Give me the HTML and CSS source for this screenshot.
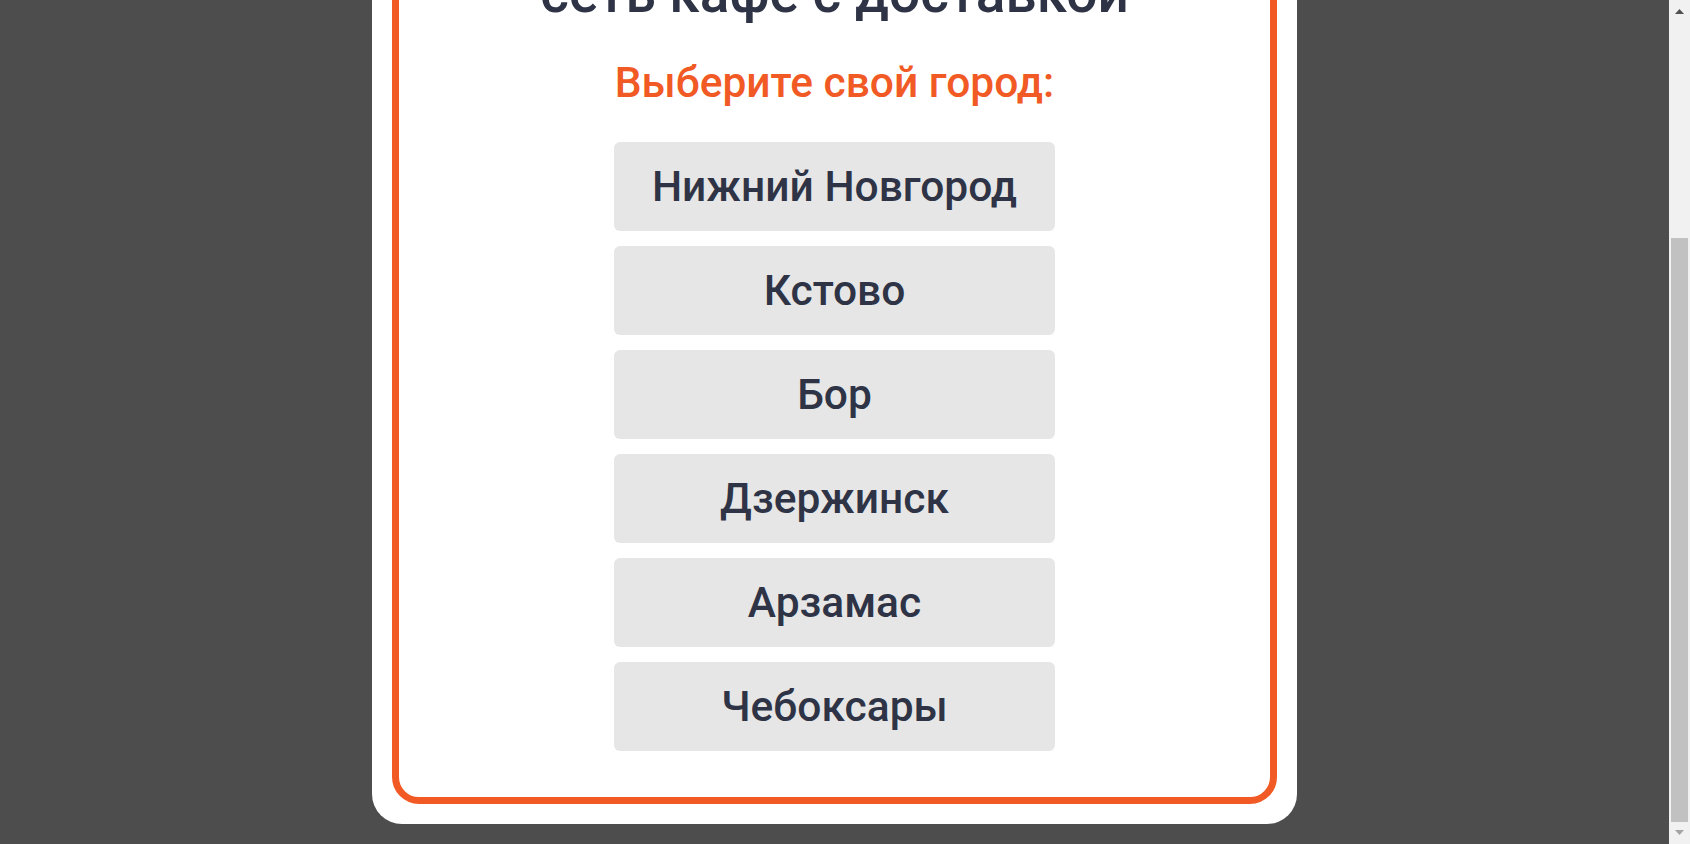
FILE: index.html
```html
<!DOCTYPE html>
<html lang="ru">
<head>
<meta charset="utf-8">
<title>Выбор города</title>
<link rel="stylesheet" href="styles.css">
</head>
<body>
<div class="page">
  <div class="viewport" id="viewport">
    <div class="overlay">
      <div class="modal">
        <div class="frame">
          <div class="logo">
            <svg width="140" height="140" viewBox="0 0 140 140" aria-hidden="true">
              <circle cx="70" cy="70" r="66" fill="#f15a24"/>
              <circle cx="70" cy="70" r="49" fill="#fff"/>
              <circle cx="70" cy="70" r="32" fill="#2e3445"/>
            </svg>
          </div>
          <h1 class="title">сеть кафе с доставкой</h1>
          <h2 class="subtitle">Выберите свой город:</h2>
          <ul class="cities">
            <li><a class="city" href="#">Нижний Новгород</a></li>
            <li><a class="city" href="#">Кстово</a></li>
            <li><a class="city" href="#">Бор</a></li>
            <li><a class="city" href="#">Дзержинск</a></li>
            <li><a class="city" href="#">Арзамас</a></li>
            <li><a class="city" href="#">Чебоксары</a></li>
          </ul>
        </div>
      </div>
    </div>
  </div>
  <div class="scrollbar" aria-hidden="true">
    <div class="sb-btn">
      <svg width="21" height="21" viewBox="0 0 21 21"><polygon points="6,14 15,14 10.5,9" fill="#505050"/></svg>
    </div>
    <div class="sb-track"><div class="sb-thumb"></div></div>
    <div class="sb-btn">
      <svg width="21" height="21" viewBox="0 0 21 21"><polygon points="6,7 15,7 10.5,12" fill="#a3a3a3"/></svg>
    </div>
  </div>
</div>
<script src="script.js"></script>
</body>
</html>
```
FILE: styles.css
```css
html, body {
  margin: 0;
  padding: 0;
  height: 100%;
  overflow: hidden;
  background: #4d4d4d;
  font-family: Roboto, "Noto Sans", "Liberation Sans", sans-serif;
}
.page {
  display: flex;
  height: 100vh;
}
.viewport {
  flex: 1;
  min-width: 0;
  overflow: hidden;
}
.scrollbar {
  width: 21px;
  flex: none;
  display: flex;
  flex-direction: column;
  background: #f1f1f1;
}
.sb-btn {
  height: 21px;
  flex: none;
}
.sb-btn svg {
  display: block;
}
.sb-track {
  flex: 1;
  padding: 217px 2px 1px;
  display: flex;
  flex-direction: column;
}
.sb-thumb {
  flex: 1;
  background: #c1c1c1;
}
.overlay {
  padding: 20px 0;
}
.modal {
  width: 925px;
  margin: 0 auto;
  box-sizing: border-box;
  padding: 20px;
  background: #fff;
  border-radius: 30px;
}
.frame {
  border: 7px solid #f15a24;
  border-radius: 27px;
  padding: 47px 20px 46px;
  display: flex;
  flex-direction: column;
  align-items: center;
}
.logo {
  height: 147px;
  display: flex;
  align-items: center;
  justify-content: center;
  margin-bottom: 33px;
}
.title {
  margin: 0 0 32px;
  font-size: 55px;
  line-height: 66px;
  font-weight: 500;
  color: #2e3445;
  text-align: center;
}
.subtitle {
  margin: 0 0 35px;
  font-size: 42.5px;
  line-height: 49px;
  font-weight: 500;
  color: #f15a24;
  text-align: center;
}
.cities {
  list-style: none;
  margin: 0;
  padding: 0;
  display: flex;
  flex-direction: column;
  gap: 15px;
}
.city {
  display: block;
  width: 441px;
  height: 89px;
  line-height: 89px;
  background: #e6e6e6;
  border-radius: 6px;
  text-align: center;
  font-size: 42.5px;
  font-weight: 500;
  color: #2e3445;
  text-decoration: none;
}
```
FILE: script.js
```js
(function () {
  var v = document.getElementById('viewport');
  function toBottom() { v.scrollTop = v.scrollHeight; }
  toBottom();
  window.addEventListener('load', toBottom);
})();
```
